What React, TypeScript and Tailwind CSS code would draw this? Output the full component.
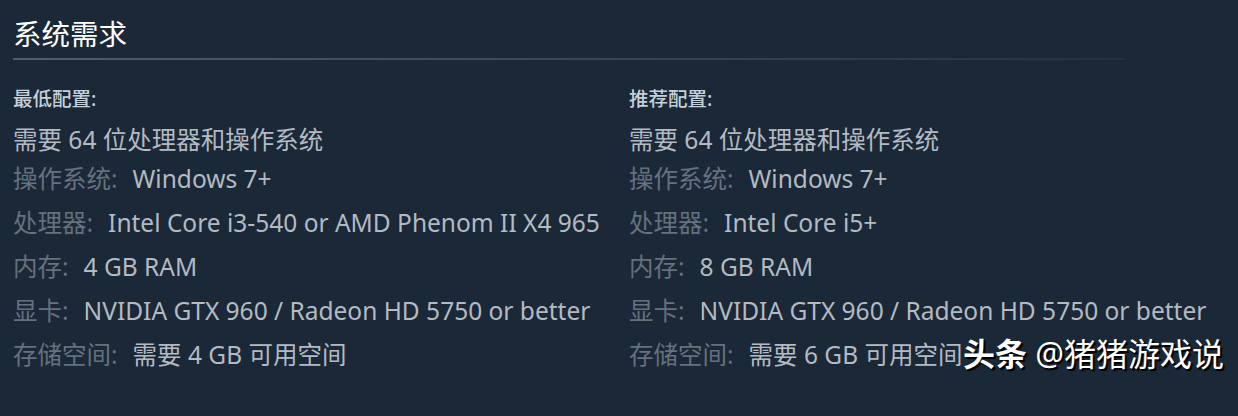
const font = { fontFamily: '"Noto Sans", "Noto Sans CJK SC", sans-serif' };

type Row = { label: string; value: string };

const minimum: Row[] = [
  { label: '操作系统:', value: 'Windows 7+' },
  { label: '处理器:', value: 'Intel Core i3-540 or AMD Phenom II X4 965' },
  { label: '内存:', value: '4 GB RAM' },
  { label: '显卡:', value: 'NVIDIA GTX 960 / Radeon HD 5750 or better' },
  { label: '存储空间:', value: '需要 4 GB 可用空间' },
];

const recommended: Row[] = [
  { label: '操作系统:', value: 'Windows 7+' },
  { label: '处理器:', value: 'Intel Core i5+' },
  { label: '内存:', value: '8 GB RAM' },
  { label: '显卡:', value: 'NVIDIA GTX 960 / Radeon HD 5750 or better' },
  { label: '存储空间:', value: '需要 6 GB 可用空间' },
];

function Column({ title, rows }: { title: string; rows: Row[] }) {
  return (
    <div>
      <div className="text-[19.5px] leading-[24px] font-medium text-[#c6d0d9]">{title}</div>
      <div className="mt-[14px] text-[24.5px] leading-[30px] text-[#b3bac2]">需要 64 位处理器和操作系统</div>
      <ul className="mt-[9px] flex flex-col gap-[14px]">
        {rows.map((r) => (
          <li key={r.label} className="text-[24.5px] leading-[30px] whitespace-nowrap">
            <span className="text-[#66717e] mr-[15px]">{r.label}</span>
            <span className="text-[#b3bac2]">{r.value}</span>
          </li>
        ))}
      </ul>
    </div>
  );
}

export default function App() {
  return (
    <div className="relative w-[1238px] h-[416px] bg-[#1b2838] overflow-hidden" style={font}>
      <div className="pl-[13px] pt-[16px] w-[1125px]">
        <h2 className="text-[28.5px] leading-[36px] text-white font-normal">系统需求</h2>
        <div className="mt-[6px] h-[2px] bg-gradient-to-r from-[#525d6b] via-[#3b4756] to-[#25313f]" />
        <div className="mt-[27px] grid grid-cols-[616px_616px]">
          <Column title="最低配置:" rows={minimum} />
          <Column title="推荐配置:" rows={recommended} />
        </div>
      </div>
      <div
        className="absolute left-[963px] top-[334px] text-[32px] leading-[40px] text-white"
        style={{ textShadow: '1px 1px 1px #000, 2px 2px 1px #000' }}
      >
        <span className="font-bold">头条</span> @猪猪游戏说
      </div>
    </div>
  );
}
